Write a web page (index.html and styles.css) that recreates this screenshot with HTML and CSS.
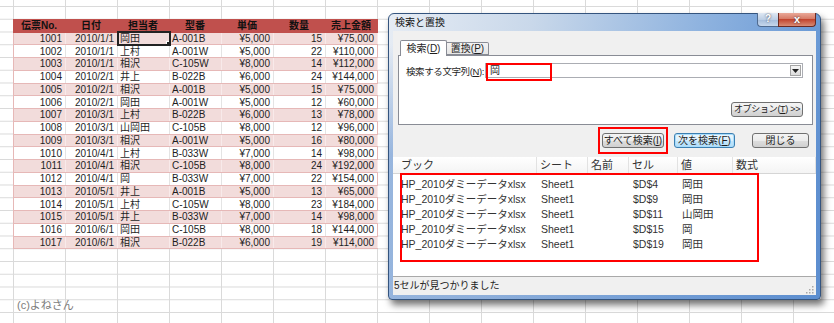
FILE: index.html
```html
<!DOCTYPE html>
<html lang="ja">
<head>
    <meta charset="UTF-8">
    <title>検索と置換</title>
    <link rel="stylesheet" href="styles.css">
</head>
<body>

<div class="sheet">
    <table class="sales">
        <tr class="head">
            <th>伝票No.</th><th>日付</th><th>担当者</th><th>型番</th><th>単価</th><th>数量</th><th>売上金額</th>
        </tr>
        <tr><td>1001</td><td>2010/1/1</td><td class="txt active">岡田</td><td class="txt">A-001B</td><td>¥5,000</td><td>15</td><td>¥75,000</td></tr>
        <tr><td>1002</td><td>2010/1/1</td><td class="txt">上村</td><td class="txt">A-001W</td><td>¥5,000</td><td>22</td><td>¥110,000</td></tr>
        <tr><td>1003</td><td>2010/1/1</td><td class="txt">相沢</td><td class="txt">C-105W</td><td>¥8,000</td><td>14</td><td>¥112,000</td></tr>
        <tr><td>1004</td><td>2010/2/1</td><td class="txt">井上</td><td class="txt">B-022B</td><td>¥6,000</td><td>24</td><td>¥144,000</td></tr>
        <tr><td>1005</td><td>2010/2/1</td><td class="txt">相沢</td><td class="txt">A-001B</td><td>¥5,000</td><td>15</td><td>¥75,000</td></tr>
        <tr><td>1006</td><td>2010/2/1</td><td class="txt">岡田</td><td class="txt">A-001W</td><td>¥5,000</td><td>12</td><td>¥60,000</td></tr>
        <tr><td>1007</td><td>2010/3/1</td><td class="txt">上村</td><td class="txt">B-022B</td><td>¥6,000</td><td>13</td><td>¥78,000</td></tr>
        <tr><td>1008</td><td>2010/3/1</td><td class="txt">山岡田</td><td class="txt">C-105B</td><td>¥8,000</td><td>12</td><td>¥96,000</td></tr>
        <tr><td>1009</td><td>2010/3/1</td><td class="txt">相沢</td><td class="txt">A-001W</td><td>¥5,000</td><td>16</td><td>¥80,000</td></tr>
        <tr><td>1010</td><td>2010/4/1</td><td class="txt">上村</td><td class="txt">B-033W</td><td>¥7,000</td><td>14</td><td>¥98,000</td></tr>
        <tr><td>1011</td><td>2010/4/1</td><td class="txt">相沢</td><td class="txt">C-105B</td><td>¥8,000</td><td>24</td><td>¥192,000</td></tr>
        <tr><td>1012</td><td>2010/4/1</td><td class="txt">岡</td><td class="txt">B-033W</td><td>¥7,000</td><td>22</td><td>¥154,000</td></tr>
        <tr><td>1013</td><td>2010/5/1</td><td class="txt">井上</td><td class="txt">A-001B</td><td>¥5,000</td><td>13</td><td>¥65,000</td></tr>
        <tr><td>1014</td><td>2010/5/1</td><td class="txt">上村</td><td class="txt">C-105W</td><td>¥8,000</td><td>23</td><td>¥184,000</td></tr>
        <tr><td>1015</td><td>2010/5/1</td><td class="txt">井上</td><td class="txt">B-033W</td><td>¥7,000</td><td>14</td><td>¥98,000</td></tr>
        <tr><td>1016</td><td>2010/6/1</td><td class="txt">岡田</td><td class="txt">C-105B</td><td>¥8,000</td><td>18</td><td>¥144,000</td></tr>
        <tr><td>1017</td><td>2010/6/1</td><td class="txt">相沢</td><td class="txt">B-022B</td><td>¥6,000</td><td>19</td><td>¥114,000</td></tr>
    </table>
    <p class="credit">(c)よねさん</p>
</div>

<div class="dialog">
    <div class="titlebar">
        <span class="title">検索と置換</span>
        <div class="caption-btns">
            <span class="cap help">?</span>
            <span class="cap close">x</span>
        </div>
    </div>

    <div class="client">
        <div class="tabs">
            <span class="tab on">検索(<u>D</u>)</span>
            <span class="tab">置換(<u>P</u>)</span>
        </div>
        <div class="panel">
            <div class="find-row">
                <span class="label">検索する文字列(<u>N</u>):</span>
                <div class="combo">
                    <span class="combo-text">岡</span>
                    <span class="combo-drop">
                        <svg width="7" height="4" viewBox="0 0 7 4"><path d="M0 0h7L3.5 4z" fill="#222"/></svg>
                    </span>
                </div>
            </div>
            <div class="opt-row">
                <span class="btn opt">オプション(<u>T</u>) &gt;&gt;</span>
            </div>
        </div>

        <div class="actions">
            <span class="btn all">すべて検索(<u>I</u>)</span>
            <span class="btn next">次を検索(<u>F</u>)</span>
            <span class="btn shut">閉じる</span>
        </div>

        <div class="results">
            <div class="res-head">
                <span>ブック</span><span>シート</span><span>名前</span><span>セル</span><span>値</span><span>数式</span>
            </div>
            <div class="res-body">
                <div class="res-row"><span>HP_2010ダミーデータxlsx</span><span>Sheet1</span><span></span><span>$D$4</span><span>岡田</span><span></span></div>
                <div class="res-row"><span>HP_2010ダミーデータxlsx</span><span>Sheet1</span><span></span><span>$D$9</span><span>岡田</span><span></span></div>
                <div class="res-row"><span>HP_2010ダミーデータxlsx</span><span>Sheet1</span><span></span><span>$D$11</span><span>山岡田</span><span></span></div>
                <div class="res-row"><span>HP_2010ダミーデータxlsx</span><span>Sheet1</span><span></span><span>$D$15</span><span>岡</span><span></span></div>
                <div class="res-row"><span>HP_2010ダミーデータxlsx</span><span>Sheet1</span><span></span><span>$D$19</span><span>岡田</span><span></span></div>
            </div>
        </div>

        <div class="status">
            <span>5セルが見つかりました</span>
            <svg class="grip" width="9" height="9" viewBox="0 0 9 9">
                <g fill="#a8a8a8">
                    <rect x="7" y="1" width="1.5" height="1.5"/>
                    <rect x="4" y="4" width="1.5" height="1.5"/><rect x="7" y="4" width="1.5" height="1.5"/>
                    <rect x="1" y="7" width="1.5" height="1.5"/><rect x="4" y="7" width="1.5" height="1.5"/><rect x="7" y="7" width="1.5" height="1.5"/>
                </g>
            </svg>
        </div>
    </div>

    <!-- red marks drawn over the screenshot -->
    <span class="mark mark-input"></span>
    <span class="mark mark-all"></span>
    <span class="mark mark-list"></span>
</div>

</body>
</html>
```

FILE: styles.css
```css
body {
    margin: 0;
    width: 834px;
    height: 323px;
    overflow: hidden;
    position: relative;
    font-family: "Liberation Sans", "Noto Sans CJK JP", sans-serif;
    color: #1e1e1e;
}

/* spreadsheet */
.sheet {
    height: 323px;
    box-sizing: border-box;
    padding: 18.75px 0 0 13px;
    background-color: #fff;
    background-image:
        linear-gradient(to right, #dadada 1px, transparent 1px),
        linear-gradient(to bottom, #dadada 1px, transparent 1px);
    background-size: 52px 12.75px;
    background-position: 13px 6px;
}
.sales {
    border-collapse: collapse;
    table-layout: fixed;
    width: 364px;
    font-size: 10px;
}
.sales tr {
    height: 12.75px;
}
.sales th, .sales td {
    width: 52px;
    padding: 0 3px 0 2px;
    line-height: 11px;
    white-space: nowrap;
    overflow: hidden;
    box-sizing: border-box;
}
.sales th {
    background-color: #c0504d;
    color: #111;
    font-weight: bold;
    text-align: center;
    border: 1px solid #c0504d;
}
.sales td {
    text-align: right;
    border-bottom: 1px solid #e6b8b7;
    border-right: 1px solid #e4e4e4;
    background-color: #fff;
}
.sales tr:nth-child(even) td {
    background-color: #f2dcdb;
    border-right-color: #f8eaea;
}
.sales td:first-child {
    border-left: 1px solid #e6b8b7;
}
.sales td:last-child {
    border-right: 1px solid #e6b8b7;
}
.sales td.txt {
    text-align: left;
}
.sales td.active {
    outline: 2px solid #222;
    outline-offset: -1px;
    position: relative;
}
.sales td.active::after {
    content: "";
    position: absolute;
    right: -3px;
    bottom: -3px;
    width: 4px;
    height: 4px;
    background: #222;
    border: 1px solid #fff;
}
.credit {
    margin: 50px 0 0 4px;
    font-size: 11px;
    line-height: 12px;
    color: #7c7c7c;
}

/* find & replace dialog */
.dialog {
    position: absolute;
    left: 388px;
    top: 13px;
    width: 433px;
    height: 287px;
    box-sizing: border-box;
    padding: 0 4px 4px 4px;
    border: 1px solid #34547e;
    border-radius: 6px 6px 4px 4px;
    background:
        linear-gradient(to bottom, transparent 0, transparent 30px, rgba(92, 140, 205, 0.55) 140px),
        linear-gradient(100deg, #e6ecf4 0%, #c9d8ea 30%, #8fb3df 65%, #5c90d2 100%);
    box-shadow: 3px 5px 7px rgba(0, 0, 0, 0.55);
    display: flex;
    flex-direction: column;
    font-size: 10px;
}
.titlebar {
    height: 17px;
    display: flex;
    align-items: flex-start;
    flex: none;
}
.title {
    padding: 3px 0 0 2px;
    line-height: 12px;
    color: #111;
}
.caption-btns {
    margin-left: auto;
    margin-top: -1px;
    display: flex;
}
.cap {
    height: 14px;
    box-sizing: border-box;
    border: 1px solid #4f6a8f;
    border-top: none;
    text-align: center;
    line-height: 12px;
    color: #fff;
    font-weight: bold;
    text-shadow: 0 0 2px #334;
}
.cap.help {
    width: 21px;
    border-radius: 0 0 0 4px;
    border-right: none;
    background: linear-gradient(#dfe8f3, #bccee4 50%, #a4bcdb 51%, #c6d7ec);
}
.cap.close {
    width: 38px;
    border-radius: 0 0 4px 0;
    border-color: #6b2a22;
    background: linear-gradient(#eaa898, #d57a66 45%, #c2452f 50%, #d98b74);
    font-size: 11px;
}
.client {
    flex: 1;
    background-color: #f0f0f0;
    display: flex;
    flex-direction: column;
}
.tabs {
    display: flex;
    align-items: flex-end;
    height: 16px;
    margin: 9px 0 -1px 7px;
    position: relative;
    z-index: 1;
}
.tab {
    box-sizing: border-box;
    width: 42px;
    height: 13px;
    border: 1px solid #898c95;
    border-left: none;
    border-radius: 0 2px 0 0;
    background: linear-gradient(#f3f3f3, #e6e6e6);
    text-align: center;
    line-height: 11px;
    margin-bottom: 1px;
}
.tab.on {
    width: 47px;
    height: 16px;
    border-left: 1px solid #898c95;
    border-bottom: none;
    border-radius: 2px 2px 0 0;
    background: #fff;
    line-height: 15px;
    margin-bottom: 0;
}
.panel {
    height: 70px;
    box-sizing: border-box;
    margin: 0 3px 0 5px;
    background-color: #fff;
    border: 1px solid #898c95;
}
.find-row {
    display: flex;
    align-items: center;
    margin: 7px 9px 0 7px;
}
.label {
    white-space: nowrap;
    font-size: 9.5px;
    letter-spacing: -0.4px;
}
.combo {
    width: 318px;
    margin-left: auto;
    height: 15px;
    box-sizing: border-box;
    border: 1px solid #abadb3;
    display: flex;
    align-items: center;
}
.combo-text {
    flex: 1;
    padding-left: 4px;
    line-height: 13px;
}
.combo-drop {
    width: 11px;
    height: 11px;
    margin-right: 1px;
    box-sizing: border-box;
    border: 1px solid #a5a5a5;
    background: linear-gradient(#f6f6f6, #dcdcdc);
    display: flex;
    align-items: center;
    justify-content: center;
}
.opt-row {
    display: flex;
    justify-content: flex-end;
    margin: 24px 9px 0 0;
}
.btn {
    display: inline-block;
    height: 15px;
    box-sizing: border-box;
    border: 1px solid #707070;
    border-radius: 3px;
    background: linear-gradient(#f4f4f4, #ececec 50%, #dedede 51%, #d0d0d0);
    text-align: center;
    line-height: 13px;
    white-space: nowrap;
    overflow: hidden;
}
.btn.opt {
    width: 72px;
    font-size: 9px;
    letter-spacing: -0.3px;
}
.actions {
    display: flex;
    justify-content: flex-end;
    margin: 8px 7px 0 0;
}
.btn.all {
    width: 62px;
}
.btn.next {
    width: 61px;
    margin-left: 10px;
    border-color: #3c7fb1;
    box-shadow: inset 0 0 0 1px #a8dcfb;
    background: linear-gradient(#edf7fd, #dcf0fc 50%, #c4e6fb 51%, #b3def9);
}
.btn.shut {
    width: 57px;
    margin-left: 17px;
}
.results {
    flex: 1;
    margin-top: 9px;
    background-color: #fff;
    display: flex;
    flex-direction: column;
}
.res-head, .res-row {
    display: grid;
    grid-template-columns: 144px 51px 41px 49px 55px 1fr;
}
.res-head {
    height: 16px;
    background: linear-gradient(#ffffff, #f4f4f4);
    border-bottom: 1px solid #d5d5d5;
    font-size: 11px;
    line-height: 16px;
}
.res-head span {
    padding-left: 3px;
    border-right: 1px solid #e2e2e2;
    color: #333;
}
.res-head span:first-child {
    padding-left: 8px;
}
.res-body {
    padding-top: 3px;
}
.res-row {
    height: 15px;
    font-size: 10.5px;
    line-height: 15px;
    color: #333;
}
.res-row span {
    padding-left: 4px;
    white-space: nowrap;
}
.res-row span:first-child {
    padding-left: 8px;
}
.status {
    height: 19px;
    box-sizing: border-box;
    border-top: 1px solid #a9a9a9;
    display: flex;
    align-items: center;
    padding-left: 1px;
    line-height: 18px;
}
.grip {
    margin: auto 2px 1px auto;
}
.mark {
    position: absolute;
    border: 2px solid #f00;
    box-sizing: border-box;
}
.mark-input {
    left: 97px;
    top: 49px;
    width: 66px;
    height: 18px;
}
.mark-all {
    left: 209px;
    top: 113px;
    width: 70px;
    height: 27px;
}
.mark-list {
    left: 11px;
    top: 159px;
    width: 359px;
    height: 89px;
}
```
